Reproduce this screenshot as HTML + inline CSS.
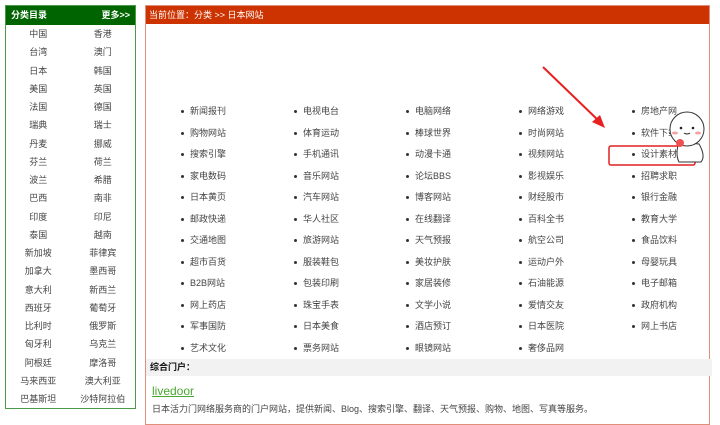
<!DOCTYPE html>
<html><head><meta charset="utf-8"><style>
*{margin:0;padding:0;box-sizing:border-box}
body{width:720px;height:417px;background:#fff;position:relative;overflow:hidden;font-family:"Liberation Sans","Noto Sans CJK SC",sans-serif;font-size:9px;color:#444}
.lp{position:absolute;left:5px;top:5px;width:131px;height:404px;border:1px solid #4a9a4a}
.lh{height:19px;background:#006400;color:#fff;font-weight:bold;font-size:9px;line-height:19px;padding:0 5px}
.lh span{float:right}
.lr{height:18.25px;line-height:18.25px;display:flex}
.lr div{width:50%;text-align:center}
.rp{position:absolute;left:145px;top:5px;width:565px;height:420px;border:1px solid #e0907a}
.rh{height:18px;background:#cc3300;color:#fff;font-size:9px;line-height:18px;padding-left:3px}
.it{position:absolute;font-size:9px;line-height:12px;white-space:nowrap}
.it:before{content:"";position:absolute;left:-9px;top:5px;width:3px;height:3px;background:#333;border-radius:50%}
.sec{position:absolute;left:146px;top:359px;width:566px;height:17px;background:#f2f2f2;font-weight:bold;color:#111;line-height:17px;padding-left:4px}
</style></head><body>
<div class="lp">
<div class="lh">分类目录<span>更多&gt;&gt;</span></div>
<div class="lr"><div>中国</div><div>香港</div></div>
<div class="lr"><div>台湾</div><div>澳门</div></div>
<div class="lr"><div>日本</div><div>韩国</div></div>
<div class="lr"><div>美国</div><div>英国</div></div>
<div class="lr"><div>法国</div><div>德国</div></div>
<div class="lr"><div>瑞典</div><div>瑞士</div></div>
<div class="lr"><div>丹麦</div><div>挪威</div></div>
<div class="lr"><div>芬兰</div><div>荷兰</div></div>
<div class="lr"><div>波兰</div><div>希腊</div></div>
<div class="lr"><div>巴西</div><div>南非</div></div>
<div class="lr"><div>印度</div><div>印尼</div></div>
<div class="lr"><div>泰国</div><div>越南</div></div>
<div class="lr"><div>新加坡</div><div>菲律宾</div></div>
<div class="lr"><div>加拿大</div><div>墨西哥</div></div>
<div class="lr"><div>意大利</div><div>新西兰</div></div>
<div class="lr"><div>西班牙</div><div>葡萄牙</div></div>
<div class="lr"><div>比利时</div><div>俄罗斯</div></div>
<div class="lr"><div>匈牙利</div><div>乌克兰</div></div>
<div class="lr"><div>阿根廷</div><div>摩洛哥</div></div>
<div class="lr"><div>马来西亚</div><div>澳大利亚</div></div>
<div class="lr"><div>巴基斯坦</div><div>沙特阿拉伯</div></div>
</div>
<div class="rp"><div class="rh">当前位置：分类 &gt;&gt; 日本网站</div></div>
<div id="g"></div>
<div class="sec">综合门户：</div>
<div style="position:absolute;left:152px;top:384px;font-size:12px;color:#4aa832;text-decoration:underline">livedoor</div>
<div style="position:absolute;left:152px;top:402px;font-size:9px;color:#444">日本活力门网络服务商的门户网站，提供新闻、Blog、搜索引擎、翻译、天气预报、购物、地图、写真等服务。</div>
<svg style="position:absolute;left:0;top:0" width="720" height="417">
<line x1="543" y1="67" x2="600" y2="122" stroke="#e82020" stroke-width="2"/>
<polygon points="605,128 592,122 600,115" fill="#e82020"/>
<rect x="609" y="146" width="86" height="19" rx="2" fill="none" stroke="#e02020" stroke-width="1.5"/>
<path d="M679 142 q-4 12 0 20 l22 0 q5 -6 -2 -18 z" fill="#fff" stroke="#333"/>
<circle cx="687" cy="129" r="17" fill="#fff" stroke="#333" stroke-width="1"/>
<circle cx="681" cy="128" r="1.3" fill="#222"/><circle cx="693" cy="128" r="1.3" fill="#222"/>
<path d="M684 133 q3 2 6 0" stroke="#222" fill="none"/>
<ellipse cx="675" cy="133" rx="3" ry="1.5" fill="#f6a0a0"/><ellipse cx="698" cy="133" rx="3" ry="1.5" fill="#f6a0a0"/>
<circle cx="680" cy="143" r="4" fill="#f05050"/>
</svg>
<script>
var c=[["新闻报刊","购物网站","搜索引擎","家电数码","日本黄页","邮政快递","交通地图","超市百货","B2B网站","网上药店","军事国防","艺术文化"],
["电视电台","体育运动","手机通讯","音乐网站","汽车网站","华人社区","旅游网站","服装鞋包","包装印刷","珠宝手表","日本美食","票务网站"],
["电脑网络","棒球世界","动漫卡通","论坛BBS","博客网站","在线翻译","天气预报","美妆护肤","家居装修","文学小说","酒店预订","眼镜网站"],
["网络游戏","时尚网站","视频网站","影视娱乐","财经股市","百科全书","航空公司","运动户外","石油能源","爱情交友","日本医院","奢侈品网"],
["房地产网","软件下载","设计素材","招聘求职","银行金融","教育大学","食品饮料","母婴玩具","电子邮箱","政府机构","网上书店"]];
var xs=[190,303,415,528,641],h="";
for(var i=0;i<5;i++)for(var j=0;j<c[i].length;j++)h+='<div class="it" style="left:'+xs[i]+'px;top:'+(105+j*21.5)+'px">'+c[i][j]+'</div>';
document.getElementById("g").innerHTML=h;
</script>
</body></html>
